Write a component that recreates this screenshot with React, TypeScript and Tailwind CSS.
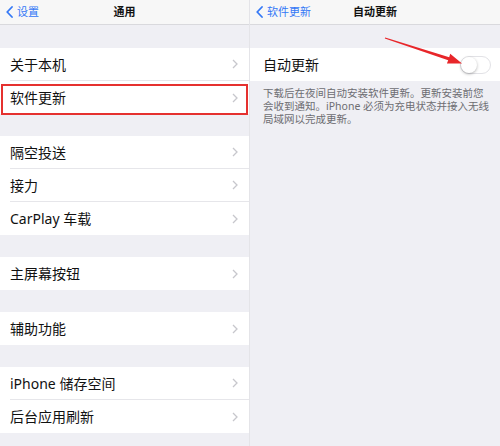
const font = { fontFamily: '"Noto Sans", "Noto Sans CJK SC", sans-serif' };

function Chevron() {
  return (
    <svg width="6" height="10" viewBox="0 0 6 10" className="shrink-0">
      <path d="M1 1l4 4-4 4" fill="none" stroke="#c7c7cc" strokeWidth="1.3" />
    </svg>
  );
}

function BackChevron() {
  return (
    <svg width="7" height="12" viewBox="0 0 7 12" className="shrink-0">
      <path d="M6 1L1.2 6 6 11" fill="none" stroke="#3478f6" strokeWidth="1.8" strokeLinecap="round" strokeLinejoin="round" />
    </svg>
  );
}

function Header({ back, title }: { back: string; title: string }) {
  return (
    <div className="relative flex h-[25px] items-center justify-center border-b border-[#d9d9dd] bg-[#f7f7f7]">
      <div className="absolute left-[6px] top-0 flex h-full items-center gap-[4px] text-[11px] text-[#3478f6]">
        <BackChevron />
        <span>{back}</span>
      </div>
      <span className="text-[11px] font-semibold text-[#111]">{title}</span>
    </div>
  );
}

function Row({ label, last, marked }: { label: string; last?: boolean; marked?: boolean }) {
  return (
    <div className="relative h-[33px] bg-white pl-[10px]">
      <div className={`flex h-full items-center justify-between pr-[11px] ${last ? "" : "border-b border-[#e6e6ea]"}`}>
        <span className="text-[14px] text-[#111]">{label}</span>
        <Chevron />
      </div>
      {marked && (
        <span className="absolute -bottom-[1px] left-[1px] right-[1px] top-[3px] border-2 border-[#e5312f]" />
      )}
    </div>
  );
}

const groups = [
  ["关于本机", "软件更新"],
  ["隔空投送", "接力", "CarPlay 车载"],
  ["主屏幕按钮"],
  ["辅助功能"],
  ["iPhone 储存空间", "后台应用刷新"],
];

export default function App() {
  return (
    <div className="flex h-[446px] w-[500px] overflow-hidden bg-[#efeff4]" style={font}>
      {/* left: 通用 */}
      <div className="w-[249px] shrink-0">
        <Header back="设置" title="通用" />
        <div className="mt-[23px] flex flex-col gap-[22px]">
          {groups.map((g, gi) => (
            <div key={gi}>
              {g.map((label, i) => (
                <Row key={label} label={label} last={i === g.length - 1} marked={label === "软件更新"} />
              ))}
            </div>
          ))}
        </div>
      </div>

      <div className="w-px shrink-0 bg-[#e4e4e8]" />

      {/* right: 自动更新 */}
      <div className="relative w-[250px] shrink-0">
        <Header back="软件更新" title="自动更新" />
        <div className="mt-[23px] flex h-[33px] items-center justify-between bg-white pl-[13px] pr-[9px]">
          <span className="text-[14px] text-[#111]">自动更新</span>
          <div className="relative h-[18px] w-[31px] rounded-full border border-[#e2e2e6] bg-white">
            <div className="absolute left-0 top-0 h-[16px] w-[16px] rounded-full bg-white shadow-[0_1px_3px_rgba(0,0,0,0.3)]" />
          </div>
        </div>
        <p className="whitespace-nowrap pl-[13px] pt-[6px] text-[10.5px] leading-[13px] text-[#6d6d72]">
          下载后在夜间自动安装软件更新。更新安装前您
          <br />
          会收到通知。iPhone 必须为充电状态并接入无线
          <br />
          局域网以完成更新。
        </p>

        <svg className="absolute left-0 top-0" width="250" height="80" viewBox="0 0 250 80">
          <polygon
            points="135.2,37.4 199.2,57.3 200.2,53.8 212,63.5 196.9,63.6 198.2,60.2 134.8,38.6"
            fill="#e8262a"
          />
        </svg>
      </div>
    </div>
  );
}
